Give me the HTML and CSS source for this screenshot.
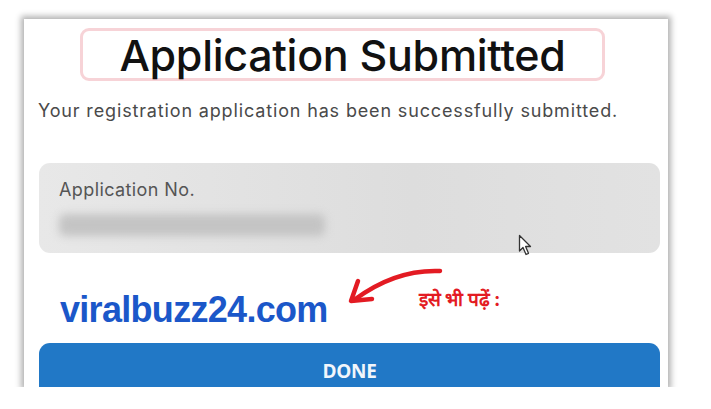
FILE: index.html
```html
<!DOCTYPE html>
<html lang="en">

<head>
  <meta charset="UTF-8">
  <meta name="viewport" content="width=device-width, initial-scale=1.0">
  <title>Application Submitted</title>

  <link rel="stylesheet" href="styles.css">
</head>

<body>
  <article class="card">
    <div class="card__title">
      <h1>Application Submitted</h1>
    </div>

    <p class="card__lead">Your registration application has been successfully submitted.</p>

    <section class="app-no">
      <p class="app-no__label">Application No.</p>
      <div class="app-no__value"></div>

      <svg class="cursor" width="16" height="24" viewBox="0 0 16 24">
        <path d="M1.5 1.5 L1.5 17 L5 13.5 L8 20.5 L10.5 19.3 L7.6 12.5 L12.5 12.5 Z" fill="#fff" stroke="#333" stroke-width="1.3" stroke-linejoin="round" />
      </svg>
    </section>

    <div class="promo">
      <span class="promo__site">viralbuzz24.com</span>

      <svg class="promo__arrow" width="100" height="40" viewBox="0 0 100 40">
        <path d="M94 3 C70 2 40 8 8 32" fill="none" stroke="#e31b23" stroke-width="4.5" stroke-linecap="round" />
        <path d="M12 13 L5 33 L26 31" fill="none" stroke="#e31b23" stroke-width="4.5" stroke-linecap="round" stroke-linejoin="round" />
      </svg>

      <span class="promo__note">इसे भी पढ़ें :</span>
    </div>

    <button class="done">DONE</button>
  </article>
</body>

</html>
```

FILE: styles.css
```css
html {
  box-sizing: border-box;
}

*,
*:before,
*:after {
  box-sizing: inherit;
}

body {
  margin: 0;
  padding: 19px 43px 0 24px;
  background: #fff;
  font-family: Inter, "Open Sans", sans-serif;
}

.card {
  position: relative;
  width: 644px;
  height: 368px;
  overflow: hidden;
  background: #fff;
  box-shadow: 0 0 6px 3px rgba(0, 0, 0, 0.3);
  padding: 9px 8px 0 15px;
}

.card__title {
  display: flex;
  justify-content: center;
  align-items: center;
  width: 525px;
  height: 53px;
  margin-left: 41px;
  border: 3px solid #f7d3d7;
  border-radius: 9px;
}

h1 {
  margin: 0;
  font-size: 43px;
  font-weight: 500;
  color: #111;
  letter-spacing: -0.3px;
}

.card__lead {
  margin: 19px 0 0 -1px;
  font-size: 18px;
  line-height: 22px;
  color: #4a4a4a;
  letter-spacing: 0.85px;
}

.app-no {
  position: relative;
  height: 90px;
  margin-top: 41px;
  padding: 16px 20px;
  background: linear-gradient(90deg, #e8e8e8, #dddddd 60%, #e2e2e2);
  border-radius: 11px;
}

.app-no__label {
  margin: 0;
  font-size: 18px;
  color: #555;
  letter-spacing: 0.4px;
}

.app-no__value {
  width: 266px;
  height: 22px;
  margin-top: 14px;
  background: #c4c4c4;
  border-radius: 6px;
  filter: blur(4px);
}

.cursor {
  position: absolute;
  left: 479px;
  top: 71px;
}

.promo {
  display: flex;
  align-items: flex-start;
  height: 90px;
  padding: 15px 0 0 21px;
}

.promo__site {
  margin-top: 21px;
  font-family: "Liberation Sans", sans-serif;
  font-size: 36px;
  font-weight: 700;
  color: #1b57c9;
  letter-spacing: -0.7px;
}

.promo__arrow {
  margin-left: 18px;
}

.promo__note {
  margin: 18px 0 0 -27px;
  font-size: 19px;
  font-weight: 700;
  color: #e31b23;
}

.done {
  display: block;
  width: 621px;
  height: 56px;
  padding: 0;
  background: #2178c6;
  border: none;
  border-radius: 11px;
  color: #f2f6fb;
  font-family: "Open Sans", sans-serif;
  font-size: 19px;
  font-weight: 700;
  letter-spacing: -0.3px;
}
```
